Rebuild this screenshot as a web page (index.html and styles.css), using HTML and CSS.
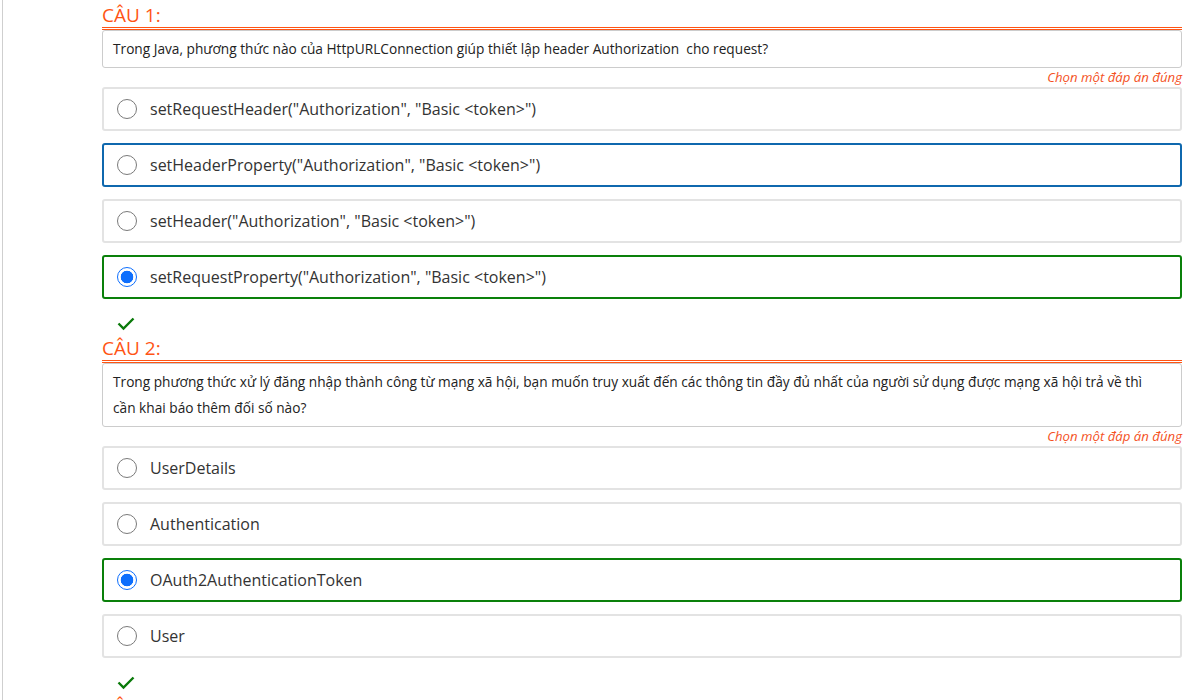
FILE: index.html
```html
<!DOCTYPE html>
<html lang="vi">
<head>
<meta charset="utf-8">
<title>Bài thi</title>
<link rel="stylesheet" href="styles.css">
</head>
<body>
<div class="page">
  <div class="content">
    <section class="question">
      <h4 class="q-title">CÂU 1:</h4>
      <div class="q-text">Trong Java, phương thức nào của HttpURLConnection giúp thiết lập header Authorization&nbsp; cho request?</div>
      <div class="q-hint">Chọn một đáp án đúng</div>
      <div class="option"><span class="radio"></span><span class="opt-text">setRequestHeader("Authorization", "Basic &lt;token&gt;")</span></div>
      <div class="option option-focus"><span class="radio"></span><span class="opt-text">setHeaderProperty("Authorization", "Basic &lt;token&gt;")</span></div>
      <div class="option"><span class="radio"></span><span class="opt-text">setHeader("Authorization", "Basic &lt;token&gt;")</span></div>
      <div class="option option-correct"><span class="radio radio-checked"></span><span class="opt-text">setRequestProperty("Authorization", "Basic &lt;token&gt;")</span></div>
      <div class="result">
        <svg class="check" width="18" height="14" viewBox="0 0 18 14"><polyline points="1.5,6.5 6.5,11.5 16.5,1.5" fill="none" stroke="#0a7a0a" stroke-width="2.4"/></svg>
      </div>
    </section>
    <section class="question">
      <h4 class="q-title">CÂU 2:</h4>
      <div class="q-text">Trong phương thức xử lý đăng nhập thành công từ mạng xã hội, bạn muốn truy xuất đến các thông tin đầy đủ nhất của người sử dụng được mạng xã hội trả về thì cần khai báo thêm đối số nào?</div>
      <div class="q-hint">Chọn một đáp án đúng</div>
      <div class="option"><span class="radio"></span><span class="opt-text">UserDetails</span></div>
      <div class="option"><span class="radio"></span><span class="opt-text">Authentication</span></div>
      <div class="option option-correct"><span class="radio radio-checked"></span><span class="opt-text">OAuth2AuthenticationToken</span></div>
      <div class="option"><span class="radio"></span><span class="opt-text">User</span></div>
      <div class="result">
        <svg class="check" width="18" height="14" viewBox="0 0 18 14"><polyline points="1.5,6.5 6.5,11.5 16.5,1.5" fill="none" stroke="#0a7a0a" stroke-width="2.4"/></svg>
      </div>
    </section>
    <section class="question">
      <h4 class="q-title">CÂU 3:</h4>
    </section>
  </div>
</div>
</body>
</html>
```

FILE: styles.css
```css
html, body {
  margin: 0;
  padding: 0;
  background: #ffffff;
  height: 100%;
  overflow: hidden;
}

body {
  font-family: "Open Sans", "Noto Sans", sans-serif;
  color: #333333;
}

.page {
  margin-left: 2px;
  border-left: 1px solid #cfcfcf;
  min-height: 100%;
  padding-left: 99px;
  padding-top: 4px;
}

.content {
  width: 1080px;
}

.q-title {
  margin: 0;
  font-size: 19px;
  font-weight: 400;
  line-height: 23px;
  color: #ff5414;
  border-bottom: 3px double #ff5414;
}

.q-text {
  border: 1px solid #cccccc;
  border-radius: 3px;
  padding: 5px 28px 5px 10px;
  font-size: 13.7px;
  line-height: 26px;
  color: #222222;
}

.q-hint {
  text-align: right;
  font-size: 13.2px;
  font-style: italic;
  line-height: 19px;
  color: #f4511e;
}

.option {
  display: flex;
  align-items: center;
  gap: 13px;
  height: 40px;
  padding: 0 13px;
  border: 2px solid #e3e3e3;
  border-radius: 3px;
  margin-bottom: 12px;
}

.option-focus {
  border-color: #0f68ae;
}

.option-correct {
  border-color: #0a800a;
}

.radio {
  box-sizing: border-box;
  width: 20px;
  height: 20px;
  border: 1px solid #7a7a7a;
  border-radius: 50%;
  flex: none;
  background: #ffffff;
}

.radio-checked {
  border: 1.5px solid #0d6efd;
  background: radial-gradient(circle, #0d6efd 0 6px, #ffffff 6.6px);
}

.opt-text {
  font-size: 16px;
  color: #333333;
}

.result {
  height: 26px;
  display: flex;
  align-items: center;
  padding-left: 15px;
}

.check {
  display: block;
}
```
